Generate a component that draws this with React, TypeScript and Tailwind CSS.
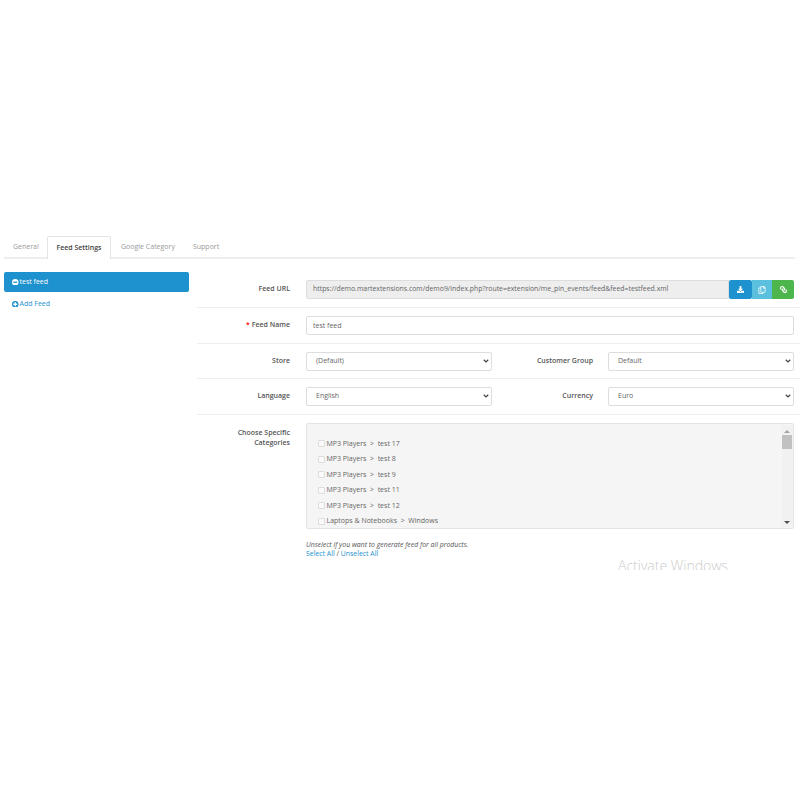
import React from "react";
import { FaDownload, FaLink, FaRegCopy } from "react-icons/fa";

const categories = [
  ["MP3 Players", "test 17"],
  ["MP3 Players", "test 8"],
  ["MP3 Players", "test 9"],
  ["MP3 Players", "test 11"],
  ["MP3 Players", "test 12"],
  ["Laptops & Notebooks", "Windows"],
];

const Label = ({ children, className = "" }: { children: React.ReactNode; className?: string }) => (
  <label className={`text-right text-[7px] font-semibold text-[#555] ${className}`}>{children}</label>
);

const Select = ({ value }: { value: string }) => (
  <div className="relative flex">
    <select
      defaultValue={value}
      className="h-[19px] w-[186px] appearance-none rounded-[2px] border border-[#dddddd] bg-white pl-[9px] text-[7px] text-[#666]"
    >
      <option>{value}</option>
    </select>
    <svg viewBox="0 0 12 8" className="pointer-events-none absolute top-[7px] right-[3px] h-[4px] w-[6px]">
      <path d="M1.5 1.5 6 6l4.5-4.5" fill="none" stroke="#444" strokeWidth="2.4" />
    </svg>
  </div>
);

const App: React.FC = () => {
  return (
    <div className="relative h-[800px] bg-white pt-[236px] font-['Open_Sans',sans-serif]">
      <div className="mx-[4px] flex h-[23px] w-[791px] items-end border-b-2 border-[#eeeeee] text-[7px] text-[#999]">
        <span className="flex h-[20px] w-[43px] items-center pl-[9px]">General</span>
        <span className="-mb-[2px] flex h-[23px] w-[64px] items-center justify-center rounded-t-[2px] border border-b-0 border-[#e4e4e4] bg-white font-semibold text-[#444]">
          Feed Settings
        </span>
        <span className="flex h-[20px] items-center pl-[10px]">Google Category</span>
        <span className="flex h-[20px] items-center pl-[18px]">Support</span>
      </div>

      <div className="flex pt-[13px]">
        <aside className="ml-[4px] w-[185px] text-[7px]">
          <div className="flex h-[20px] items-center gap-[1px] rounded-[2px] bg-[#1e91cf] pl-[8px] text-white">
            <svg viewBox="0 0 10 10" className="h-[6.5px] w-[6.5px]">
              <circle cx="5" cy="5" r="5" fill="#fff" />
              <rect x="2" y="4" width="6" height="2" fill="#1e91cf" />
            </svg>
            test feed
          </div>
          <div className="mt-[6px] flex h-[12px] items-center gap-[1px] pl-[8px] text-[#1e91cf]">
            <svg viewBox="0 0 10 10" className="h-[6.5px] w-[6.5px]">
              <circle cx="5" cy="5" r="5" fill="#1e91cf" />
              <path d="M2 5h6M5 2v6" stroke="#fff" strokeWidth="2" />
            </svg>
            Add Feed
          </div>
        </aside>

        <main className="ml-[8px] flex w-[603px] flex-col">
          <div className="flex h-[36px] items-center border-b border-[#eeeeee]">
            <Label className="w-[93px]">Feed URL</Label>
            <div className="ml-[16px] flex h-[19px] w-[488px]">
              <div className="flex flex-1 items-center rounded-l-[2px] border border-[#dddddd] bg-[#eeeeee] pl-[6px] text-[6.9px] text-[#666]">
                https://demo.martextensions.com/demo9/index.php?route=extension/me_pin_events/feed&amp;feed=testfeed.xml
              </div>
              <button className="flex w-[23px] items-center justify-center rounded-[2px] bg-[#1e91cf] text-white">
                <FaDownload size={7} />
              </button>
              <button className="flex w-[20px] items-center justify-center bg-[#5bc0de] text-white">
                <FaRegCopy size={8} />
              </button>
              <button className="flex w-[22px] items-center justify-center rounded-r-[2px] bg-[#4cb64c] text-white">
                <FaLink size={7} className="-scale-x-100" />
              </button>
            </div>
          </div>

          <div className="flex h-[36px] items-center border-b border-[#eeeeee]">
            <Label className="w-[93px]">
              <span className="text-[#f00]">* </span>Feed Name
            </Label>
            <input
              defaultValue="test feed"
              className="ml-[16px] h-[19px] w-[488px] rounded-[2px] border border-[#dddddd] bg-white pl-[6px] text-[7px] text-[#666]"
            />
          </div>

          <div className="flex h-[35px] items-center border-b border-[#eeeeee]">
            <Label className="w-[93px]">Store</Label>
            <div className="ml-[16px]">
              <Select value="(Default)" />
            </div>
            <Label className="w-[101px]">Customer Group</Label>
            <div className="ml-[15px]">
              <Select value="Default" />
            </div>
          </div>

          <div className="flex h-[36px] items-center border-b border-[#eeeeee]">
            <Label className="w-[93px]">Language</Label>
            <div className="ml-[16px]">
              <Select value="English" />
            </div>
            <Label className="w-[101px]">Currency</Label>
            <div className="ml-[15px]">
              <Select value="Euro" />
            </div>
          </div>

          <div className="flex pt-[8px]">
            <Label className="w-[93px] pt-[5px] leading-[9.5px]">
              Choose Specific
              <br />
              Categories
            </Label>
            <div className="ml-[16px] w-[488px]">
              <div className="flex h-[106px] rounded-[2px] border border-[#e4e4e4] bg-[#f5f5f5]">
                <ul className="flex-1 pl-[11px] pt-[12px] text-[7px] text-[#666]">
                  {categories.map(([parent, child]) => (
                    <li key={parent + child} className="flex h-[15.5px] items-center gap-[1.5px]">
                      <span className="h-[7px] w-[7px] rounded-[1px] border border-[#dddddd] bg-[#fafafa]" />
                      <span className="whitespace-pre">
                        {parent}  &gt;  {child}
                      </span>
                    </li>
                  ))}
                </ul>
                <div className="my-[1px] mr-[1px] flex w-[10px] flex-col items-center bg-[#f1f1f1]">
                  <span className="mt-[5px] h-0 w-0 border-x-[3px] border-b-[3px] border-x-transparent border-b-[#a3a3a3]" />
                  <span className="mt-[2px] h-[14px] w-[10px] bg-[#c1c1c1]" />
                  <span className="mt-auto mb-[3px] h-0 w-0 border-x-[3px] border-t-[3px] border-x-transparent border-t-[#505050]" />
                </div>
              </div>
              <p className="mt-[11px] text-[6.9px] leading-[9px] text-[#555] italic">
                Unselect if you want to generate feed for all products.
              </p>
              <p className="text-[6.9px] leading-[9px] text-[#555]">
                <span className="text-[#1e91cf]">Select All</span> / <span className="text-[#1e91cf]">Unselect All</span>
              </p>
            </div>
          </div>
        </main>
      </div>

      {/* watermark, cut off by the crop of the original shot */}
      <div className="absolute top-[557px] left-[618px] h-[13px] overflow-hidden text-[14px] leading-[18px] font-light text-[#cccccc]">
        Activate Windows
      </div>
    </div>
  );
};

export default App;
